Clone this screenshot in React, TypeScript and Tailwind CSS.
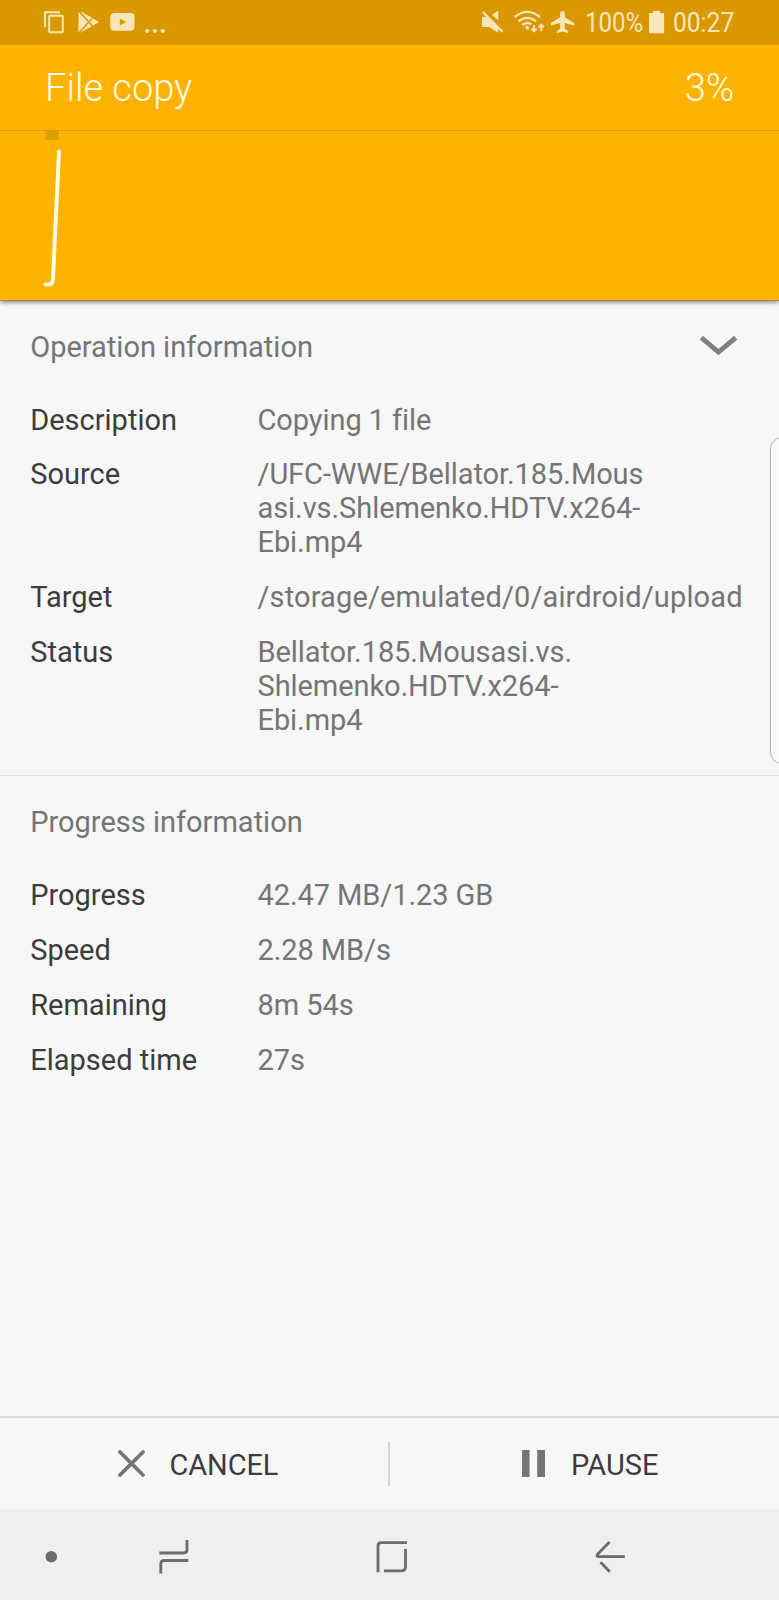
import { ReactNode } from "react";

type Row = { label: string; lines: string[]; className?: string };

const operationRows: Row[] = [
  { label: "Description", lines: ["Copying 1 file"] },
  {
    label: "Source",
    lines: ["/UFC-WWE/Bellator.185.Mous", "asi.vs.Shlemenko.HDTV.x264-", "Ebi.mp4"],
  },
  {
    label: "Target",
    lines: ["/storage/emulated/0/airdroid/upload"],
    className: "tracking-[0.13px]",
  },
  {
    label: "Status",
    lines: ["Bellator.185.Mousasi.vs.", "Shlemenko.HDTV.x264-", "Ebi.mp4"],
  },
];

const progressRows: Row[] = [
  { label: "Progress", lines: ["42.47 MB/1.23 GB"] },
  { label: "Speed", lines: ["2.28 MB/s"] },
  { label: "Remaining", lines: ["8m 54s"] },
  { label: "Elapsed time", lines: ["27s"] },
];

function StatusBar() {
  return (
    <div className="relative z-10 flex h-[45px] shrink-0 items-center bg-[#d99800] text-[#f9e6b8]">
      <svg className="h-[45px] w-[180px] shrink-0" viewBox="0 0 180 45" fill="none">
        {/* copy */}
        <path d="M45 27V12.2h15" stroke="currentColor" strokeWidth="2" />
        <rect x="49.2" y="15.7" width="13.6" height="16.6" rx="0.8" stroke="currentColor" strokeWidth="2" />
        {/* play store */}
        <path
          d="M78.5 12v20.3l9.3-10.2zM79.8 11l9 9.8 3.2-3.1zM89.6 22l3.4-3.5 6 3.5-6 3.6zM88.7 23.2l-8.9 9.7 12.2-6.6z"
          fill="currentColor"
        />
        {/* youtube */}
        <path
          d="M114.5 13h15.8q4.2 0 4.2 4.2v9.4q0 4.2-4.2 4.2h-15.8q-4.2 0-4.2-4.2v-9.4q0-4.2 4.2-4.2zm5.3 5.4v7.2l6.4-3.6z"
          fill="currentColor"
          fillRule="evenodd"
        />
        <circle cx="147.2" cy="30.9" r="2" fill="currentColor" />
        <circle cx="154.9" cy="30.9" r="2" fill="currentColor" />
        <circle cx="162.7" cy="30.9" r="2" fill="currentColor" />
      </svg>
      <svg className="ml-auto h-[45px] w-[101px] shrink-0" viewBox="480 0 101 45" fill="none">
        {/* muted */}
        <path d="M482 17h5.5l10.5 10.2v5.5L489.3 27H482z" fill="currentColor" />
        <path d="M498.3 10.8v9.6l-6.3-5.6z" fill="currentColor" />
        <path d="M482.8 12 502.4 31.8" stroke="currentColor" strokeWidth="2.3" />
        {/* wifi */}
        <path
          d="M514.6 17.2q12.7-10.6 25.4 0M518.5 21.4q8.8-7 17.6 0M522.2 25q5.1-3.6 9.6-.6"
          stroke="currentColor"
          strokeWidth="2.2"
        />
        <circle cx="527.2" cy="27.7" r="2" fill="currentColor" />
        <path
          d="M534 25v6.4m-2.6-2.8 2.6 2.9 2.6-2.9M541.3 31v-6.5m-2.6 2.9 2.6-2.9 2.6 2.9"
          stroke="currentColor"
          strokeWidth="1.8"
        />
        {/* airplane */}
        <path
          d="M574.2 25.4v-2.3l-9.4-5.8v-4.6q0-1.8-2.3-1.8t-2.3 1.8v4.6l-9.4 5.8v2.3l9.4-2.5v5.8l-3.1 2.2v2.1l5.4-1.5 5.4 1.5v-2.1l-3.1-2.2v-5.8z"
          fill="currentColor"
        />
      </svg>
      <div className="w-[68px] shrink-0 pl-[3.5px] pt-[2.5px]">
        <span className="inline-block origin-left scale-x-[.89] whitespace-nowrap text-[27px] leading-[45px]">100%</span>
      </div>
      <svg className="h-[45px] w-[16px] shrink-0" viewBox="649 0 16 45">
        <path d="M649 13h4.2v-2.2h6.7V13h4.2v20.3H649z" fill="currentColor" />
      </svg>
      <div className="w-[114px] shrink-0 pl-[7.5px] pt-[2.5px]">
        <span className="inline-block origin-left scale-x-[.91] whitespace-nowrap text-[27px] leading-[45px]">00:27</span>
      </div>
    </div>
  );
}

function SpeedGraph() {
  return (
    <div className="h-[169px]">
      <svg className="block h-[169px] w-full" viewBox="0 131 779 169" fill="none">
        <path d="M45.3 130h13.7v10H45.3z" fill="#dda000" />
        <path
          d="M59 151.5 52.9 279.5Q52.3 284.6 48.5 284.6H45.5"
          stroke="#fffbe0"
          strokeWidth="4"
          strokeLinecap="round"
        />
      </svg>
    </div>
  );
}

function Section({ title, rows, action }: { title: string; rows: Row[]; action?: ReactNode }) {
  return (
    <section className="pl-[30.2px]">
      <div className="flex h-[73px] items-start justify-between pr-[42px]">
        <h2 className="text-[#757575]">{title}</h2>
        {action}
      </div>
      <dl className="flex flex-col gap-[20.8px]">
        {rows.map((row) => (
          <div key={row.label} className="flex">
            <dt className="w-[227.3px] shrink-0 text-[#3c3c3c]">{row.label}</dt>
            <dd className={`whitespace-nowrap text-[#757575] ${row.className ?? "tracking-[-0.07px]"}`}>
              {row.lines.map((line) => (
                <div key={line}>{line}</div>
              ))}
            </dd>
          </div>
        ))}
      </dl>
    </section>
  );
}

export default function App() {
  return (
    <div className="relative flex h-[1600px] w-[779px] flex-col overflow-hidden bg-[#f7f7f7] font-['Roboto',sans-serif] text-[29px] leading-[34px]">
      <StatusBar />
      <header className="h-[256px] shrink-0 border-b border-[#a98a50] bg-[#ffb200] shadow-[0_1px_5px_rgba(0,0,0,0.55)]">
        <div className="flex h-[86px] items-center justify-between border-b border-[#dd9b02] pl-[45px] pr-[45px] pt-px text-[38px] font-light text-[#fffbe6]">
          <h1>File copy</h1>
          <span>3%</span>
        </div>
        <SpeedGraph />
      </header>

      <main className="flex-1">
        <div className="h-[475px] border-b border-[#e4e4e4] pt-[28.7px]">
          <Section
            title="Operation information"
            rows={operationRows}
            action={
              <svg className="mt-[4px] h-[24px] w-[38px]" viewBox="699 334 38 24" fill="none">
                <path d="M701.3 337.6 718.5 352 735.7 337.6" stroke="#808080" strokeWidth="4.8" />
              </svg>
            }
          />
        </div>
        <div className="pt-[29.4px]">
          <Section title="Progress information" rows={progressRows} />
        </div>
      </main>

      <footer className="flex h-[93px] shrink-0 items-center border-t-2 border-[#dadada] text-[#3c3c3c]">
        <button className="flex h-full w-[388px] items-center pl-[118px]">
          <svg className="h-[27px] w-[27px]" viewBox="0 0 27 27">
            <path d="M2 2 25 25M25 2 2 25" stroke="#757575" strokeWidth="3.8" strokeLinecap="round" />
          </svg>
          <span className="pl-[24.5px] pt-[3px] tracking-[-0.1px]">CANCEL</span>
        </button>
        <div className="h-[44px] w-[2px] bg-[#d4d4d4]" />
        <button className="flex h-full flex-1 items-center pl-[132px]">
          <svg className="h-[27px] w-[23px]" viewBox="0 0 23 27" fill="#757575">
            <path d="M0 0h7.6v27H0zM15.2 0h7.8v27h-7.8z" />
          </svg>
          <span className="pl-[26px] pt-[3px]">PAUSE</span>
        </button>
      </footer>

      <nav className="h-[91px] shrink-0 bg-[#efefef]">
        <svg className="block h-[91px] w-full" viewBox="0 1509 779 91" fill="none" stroke="#6c6c6c" strokeWidth="2.8">
          <circle cx="51.3" cy="1556.7" r="5.8" fill="#6c6c6c" stroke="none" />
          <path d="M159.3 1553H183.5Q187 1553 187 1549.5V1540M188.3 1560.5H164.3Q160.8 1560.5 160.8 1564V1573.5" />
          <path d="M378 1572.3V1545.8Q378 1542.7 381.2 1542.7H407M405.5 1549V1567Q405.5 1570.8 401.7 1570.8H384" />
          <path d="M624.8 1556.7H598.2Q596 1556.2 597.8 1554L609.5 1542M600.5 1562.3 609.8 1571.8" strokeLinejoin="round" />
        </svg>
      </nav>

      {/* edge panel handle */}
      <div className="absolute left-[770px] top-[437px] h-[327px] w-[24px] rounded-[13px] border border-[#b4b4b4] bg-[#fafafa]" />
    </div>
  );
}
